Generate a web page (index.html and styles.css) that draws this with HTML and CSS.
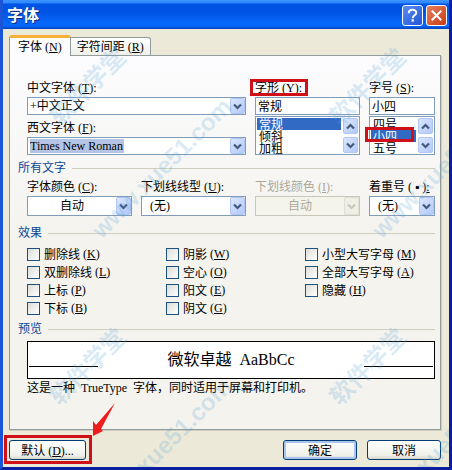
FILE: index.html
```html
<!DOCTYPE html>
<html lang="zh-CN">
<head>
    <meta charset="UTF-8">
    <meta name="viewport" content="width=device-width, initial-scale=1.0">
    <title>字体</title>
    <link rel="stylesheet" href="styles.css">
</head>
<body>
    <!-- Shared arrow shapes -->
    <svg class="defs" aria-hidden="true">
        <symbol id="down" viewBox="0 0 9 7"><path d="M1 1.5 L4.5 5 L8 1.5" fill="none" stroke="currentColor" stroke-width="2.2"/></symbol>
        <symbol id="up" viewBox="0 0 9 7"><path d="M1 5.5 L4.5 2 L8 5.5" fill="none" stroke="currentColor" stroke-width="2.2"/></symbol>
    </svg>

    <div class="window">
        <div class="title-bar">
            <h1>字体</h1>
            <button type="button" class="title-button help" aria-label="帮助">
                <svg viewBox="0 0 20 20"><path d="M6 7.5 C6 2.8 14 2.8 14 7 C14 9.8 10.2 9.6 10.2 12.8" fill="none" stroke="#fff" stroke-width="2"/><rect x="9" y="14" width="2.4" height="2.4" fill="#fff"/></svg>
            </button>
            <button type="button" class="title-button close" aria-label="关闭">
                <svg viewBox="0 0 20 20"><path d="M5 5 L15 15 M15 5 L5 15" fill="none" stroke="#fff" stroke-width="2.2"/></svg>
            </button>
        </div>

        <form class="content">
            <div class="tabs">
                <button type="button" class="tab active">字体<span class="key">(<u>N</u>)</span></button>
                <button type="button" class="tab">字符间距<span class="key">(<u>R</u>)</span></button>
            </div>

            <div class="panel">
                <div class="columns top">
                    <div class="fonts">
                        <div class="field">
                            <label for="cnFont">中文字体<span class="key">(<u>T</u>):</span></label>
                            <div class="combo">
                                <select id="cnFont"><option>+中文正文</option></select>
                                <span class="arrow"><svg><use href="#down"/></svg></span>
                            </div>
                        </div>
                        <div class="field">
                            <label for="enFont">西文字体<span class="key">(<u>F</u>):</span></label>
                            <div class="combo">
                                <select id="enFont" class="highlight"><option>Times New Roman</option></select>
                                <span class="arrow"><svg><use href="#down"/></svg></span>
                            </div>
                        </div>
                    </div>
                    <div class="field">
                        <label for="style" class="marked">字形<span class="key">(<u>Y</u>):</span></label>
                        <input type="text" id="style" value="常规">
                        <div class="list">
                            <select size="3" aria-label="字形">
                                <option selected>常规</option>
                                <option>倾斜</option>
                                <option>加粗</option>
                            </select>
                            <div class="scroll">
                                <span class="arrow"><svg><use href="#up"/></svg></span>
                                <span class="arrow"><svg><use href="#down"/></svg></span>
                            </div>
                        </div>
                    </div>
                    <div class="field">
                        <label for="size">字号<span class="key">(<u>S</u>):</span></label>
                        <input type="text" id="size" value="小四">
                        <div class="list">
                            <select size="3" aria-label="字号">
                                <option>四号</option>
                                <option selected>小四</option>
                                <option>五号</option>
                            </select>
                            <div class="scroll">
                                <span class="arrow"><svg><use href="#up"/></svg></span>
                                <span class="arrow"><svg><use href="#down"/></svg></span>
                            </div>
                            <span class="list-mark"></span>
                        </div>
                    </div>
                </div>

                <h2>所有文字</h2>
                <div class="columns all-text">
                    <div class="field">
                        <label for="color">字体颜色<span class="key">(<u>C</u>):</span></label>
                        <div class="combo auto">
                            <select id="color"><option>自动</option></select>
                            <span class="arrow"><svg><use href="#down"/></svg></span>
                        </div>
                    </div>
                    <div class="field">
                        <label for="underline">下划线线型<span class="key">(<u>U</u>):</span></label>
                        <div class="combo none">
                            <select id="underline"><option>(无)</option></select>
                            <span class="arrow"><svg><use href="#down"/></svg></span>
                        </div>
                    </div>
                    <div class="field disabled">
                        <label for="underlineColor">下划线颜色<span class="key">(<u>I</u>):</span></label>
                        <div class="combo auto">
                            <select id="underlineColor" disabled><option>自动</option></select>
                            <span class="arrow"><svg><use href="#down"/></svg></span>
                        </div>
                    </div>
                    <div class="field">
                        <label for="emphasis">着重号<span class="key">( ▪ )<u>:</u></span></label>
                        <div class="combo none">
                            <select id="emphasis"><option>(无)</option></select>
                            <span class="arrow"><svg><use href="#down"/></svg></span>
                        </div>
                    </div>
                </div>

                <h2>效果</h2>
                <div class="effects">
                    <label><input type="checkbox">删除线<span class="key">(<u>K</u>)</span></label>
                    <label><input type="checkbox">双删除线<span class="key">(<u>L</u>)</span></label>
                    <label><input type="checkbox">上标<span class="key">(<u>P</u>)</span></label>
                    <label><input type="checkbox">下标<span class="key">(<u>B</u>)</span></label>
                    <label><input type="checkbox">阴影<span class="key">(<u>W</u>)</span></label>
                    <label><input type="checkbox">空心<span class="key">(<u>O</u>)</span></label>
                    <label><input type="checkbox">阳文<span class="key">(<u>E</u>)</span></label>
                    <label><input type="checkbox">阴文<span class="key">(<u>G</u>)</span></label>
                    <label><input type="checkbox">小型大写字母<span class="key">(<u>M</u>)</span></label>
                    <label><input type="checkbox">全部大写字母<span class="key">(<u>A</u>)</span></label>
                    <label><input type="checkbox">隐藏<span class="key">(<u>H</u>)</span></label>
                </div>

                <h2>预览</h2>
                <div class="preview">
                    <span class="rule"></span>
                    <span class="sample">微软卓越&nbsp; AaBbCc</span>
                    <span class="rule"></span>
                </div>
                <p class="note">这是一种&nbsp; TrueType&nbsp; 字体，同时适用于屏幕和打印机。</p>
            </div>

            <div class="buttons">
                <div class="default">
                    <button type="button">默认<span class="key">(<u>D</u>)...</span></button>
                    <svg class="pointer" viewBox="0 0 24 34" aria-hidden="true"><path d="M23 0 L9 26 L11 28 L1 33 L1 18 L4 22 Z" fill="#ee1c1c"/></svg>
                </div>
                <button type="submit" class="primary">确定</button>
                <button type="button">取消</button>
            </div>
        </form>

        <div class="watermarks" aria-hidden="true">
            <span class="mark-name top-row left">软件学堂</span>
            <span class="mark-name top-row right">软件学堂</span>
            <span class="mark-name bottom-row left">软件学堂</span>
            <span class="mark-name bottom-row right">软件学堂</span>
            <span class="mark-site top-row left">www.xue51.com</span>
            <span class="mark-site top-row right">www.xue51.com</span>
            <span class="mark-site bottom-row left">www.xue51.com</span>
            <span class="mark-site bottom-row right">www.xue51.com</span>
        </div>
    </div>
</body>
</html>
```

FILE: styles.css
```css
* {
    box-sizing: border-box;
}

body {
    margin: 0;
    font-family: "Liberation Serif", "Noto Sans CJK SC", serif;
    font-size: 12px;
    color: #000;
}

button, input, select {
    margin: 0;
    padding: 0;
    font: inherit;
    color: inherit;
}

.defs {
    display: none;
}

.window {
    position: relative;
    display: flex;
    flex-direction: column;
    min-height: 100vh;
    overflow: hidden;
    background-color: #ece9d8;
    border: 3px solid #0a1fa0;
    border-top: none;
    border-left-color: #1a55d8;
}

/* Title bar */
.title-bar {
    display: flex;
    align-items: center;
    gap: 3px;
    height: 29px;
    margin: 0 -3px;
    padding: 2px 5px 0 7px;
    background: linear-gradient(#3c95ff 0, #2c86fa 3px, #0054e3 4px, #0054e3 12px, #0566fa 22px, #0566fa 26px, #0340b8 29px);
}

.title-bar h1 {
    flex: 1;
    margin: 0;
    font-size: 16px;
    line-height: 20px;
    color: #fff;
    text-shadow: 1px 1px #0a2a80;
}

.title-button {
    width: 21px;
    height: 21px;
    border: 1px solid #fff;
    border-radius: 3px;
}

.title-button svg {
    display: block;
    width: 19px;
    height: 19px;
}

.help {
    background: linear-gradient(135deg, #5a8df0, #2254d8);
}

.close {
    background: linear-gradient(135deg, #e88060, #c83c14);
}

.content {
    flex: 1;
    display: flex;
    flex-direction: column;
    padding: 6px 8px 7px 6px;
}

/* Tabs */
.tabs {
    display: flex;
    align-items: flex-end;
}

.tab {
    height: 18px;
    padding: 0 6px;
    line-height: 16px;
    background: linear-gradient(#fff, #f0efe8);
    border: 1px solid #919b9c;
    border-left: none;
    border-bottom: none;
    border-radius: 0 3px 0 0;
}

.tab.active {
    position: relative;
    height: 21px;
    margin-bottom: -1px;
    padding: 0 8px;
    background: #fcfcfe;
    border-left: 1px solid #919b9c;
    border-top: 3px solid #f5b03c;
    border-radius: 3px 3px 0 0;
}

.key {
    margin-left: 3px;
}

.panel {
    flex: 1;
    padding: 23px 5px 5px 8px;
    background: linear-gradient(#fcfcfe, #f4f3ee 50%);
    border: 1px solid #919b9c;
    box-shadow: 1px 1px #d0cebf;
}

.columns {
    display: grid;
    grid-template-columns: 105fr 105fr 105fr 66fr;
    gap: 9px;
    padding-left: 9px;
}

.fonts {
    grid-column: span 2;
    display: flex;
    flex-direction: column;
    gap: 4px;
}

.field {
    min-width: 0;
}

.field label {
    display: block;
    width: max-content;
    line-height: 18px;
    white-space: nowrap;
}

.field input {
    display: block;
    width: 100%;
    height: 18px;
    padding: 0 2px;
    background-color: #fff;
    border: 1px solid #7f9db9;
}

/* Red frames round the highlighted parts */
.marked {
    position: relative;
}

.marked::after {
    content: "";
    position: absolute;
    inset: 0 -6px 1px -5px;
    border: 3px solid #d01018;
}

.list-mark {
    position: absolute;
    inset: 10px 20px 12px -5px;
    border: 3px solid #d01018;
}

/* Drop-downs */
.combo {
    position: relative;
}

.combo select {
    display: block;
    appearance: none;
    width: 100%;
    height: 18px;
    padding: 0 20px 0 2px;
    background-color: #fff;
    border: 1px solid #7f9db9;
    border-radius: 0;
}

.combo .highlight {
    background: linear-gradient(#b4c4e4, #b4c4e4) 2px center / 94px 14px no-repeat #fff;
}

.arrow {
    display: flex;
    align-items: center;
    justify-content: center;
    width: 15px;
    background: linear-gradient(135deg, #dbe6fe, #b3c9f8);
    border: 1px solid #b0c6f4;
    border-radius: 2px;
    color: #43597c;
}

.arrow svg {
    width: 9px;
    height: 7px;
}

.combo .arrow {
    position: absolute;
    top: 1px;
    right: 1px;
    bottom: 1px;
    pointer-events: none;
}

.all-text .combo select {
    height: 20px;
}

.all-text .auto select {
    padding-left: 32px;
}

.all-text .none select {
    padding-left: 8px;
}

.disabled, .disabled select {
    color: #aca899;
    opacity: 1;
}

.disabled .combo select {
    background-color: #f5f4ea;
    border-color: #c9c7ba;
}

.disabled .arrow {
    background: #f0efe6;
    border-color: #e0ded0;
    color: #c9c7ba;
}

/* List boxes */
.list {
    position: relative;
    height: 39px;
    margin-top: 1px;
    padding: 1px;
    background-color: #fff;
    border: 1px solid #7f9db9;
}

.list select {
    display: block;
    width: 100%;
    height: 36px;
    border: none;
    border-radius: 0;
    outline: none;
    overflow: hidden;
    scrollbar-width: none;
}

.list option {
    display: flex;
    align-items: center;
    height: 12px;
    min-height: 12px;
    padding: 0 2px;
    line-height: 12px;
    overflow: visible;
}

.list option:checked {
    background: linear-gradient(#316ac5, #316ac5);
    color: #fff;
}

.scroll {
    position: absolute;
    top: 1px;
    right: 1px;
    bottom: 1px;
    display: flex;
    flex-direction: column;
    justify-content: space-between;
    padding-left: 2px;
    background-color: #fff;
    pointer-events: none;
}

.scroll .arrow {
    height: 16px;
}

/* Section headings */
h2 {
    display: flex;
    align-items: center;
    gap: 6px;
    margin: 0;
    font-size: 12px;
    font-weight: normal;
    line-height: 14px;
    color: #0a4696;
}

h2::after {
    content: "";
    flex: 1;
    height: 1px;
    background-color: #d0cebf;
}

.top {
    margin-bottom: 6px;
}

.all-text {
    margin: 3px 0 10px;
}

.effects {
    display: grid;
    grid-template-columns: 139fr 139fr 130fr;
    grid-template-rows: repeat(4, 18px);
    grid-auto-flow: column;
    margin: 5px 0;
    padding-left: 9px;
}

.effects label {
    display: flex;
    align-items: center;
    white-space: nowrap;
}

.effects input {
    appearance: none;
    width: 13px;
    height: 13px;
    margin-right: 4px;
    background: linear-gradient(135deg, #dcdcd7, #fff);
    border: 1px solid #1c5180;
}

/* Preview */
.preview {
    display: flex;
    align-items: center;
    justify-content: space-between;
    height: 38px;
    margin: 5px 0 0 9px;
    padding: 0 1px;
    background-color: #fff;
    border: 1px solid #000;
}

.rule {
    width: 69px;
    height: 1px;
    margin-top: 13px;
    background-color: #000;
}

.sample {
    font-size: 16px;
    line-height: 20px;
}

.note {
    margin: 0 0 0 9px;
    line-height: 18px;
}

/* Bottom buttons */
.buttons {
    display: flex;
    gap: 10px;
    padding-top: 10px;
}

.buttons button {
    width: 74px;
    height: 20px;
    background: linear-gradient(#fff, #f0f0ea 80%, #d8d4c8);
    border: 1px solid #003c74;
    border-radius: 3px;
}

.buttons .primary {
    box-shadow: inset 0 0 0 2px #a8c4f0;
}

.default {
    position: relative;
    margin-right: auto;
}

.buttons .default button {
    display: block;
    width: 77px;
}

.default::after {
    content: "";
    position: absolute;
    inset: -5px -6px -4px -5px;
    border: 3px solid #d01018;
}

.pointer {
    position: absolute;
    left: 83px;
    bottom: 23px;
    width: 24px;
    height: 34px;
}

/* Watermarks over the whole window */
.watermarks {
    position: absolute;
    inset: 0 -3px -3px;
    overflow: hidden;
    color: rgba(90, 165, 215, 0.24);
    font-family: "Liberation Sans", "Noto Sans CJK SC", sans-serif;
    font-size: 24px;
    font-weight: bold;
    pointer-events: none;
}

.watermarks span {
    position: absolute;
    line-height: 24px;
    white-space: nowrap;
    transform: rotate(-45deg);
    transform-origin: 0 50%;
}

.mark-name.top-row {
    top: 109px;
}

.mark-name.bottom-row {
    top: 389px;
}

.mark-name.left {
    left: 54px;
}

.mark-name.right {
    left: 334px;
}

.mark-site.top-row {
    top: 222px;
}

.mark-site.bottom-row {
    top: 502px;
}

.mark-site.left {
    left: 96px;
}

.mark-site.right {
    left: 376px;
}
```
